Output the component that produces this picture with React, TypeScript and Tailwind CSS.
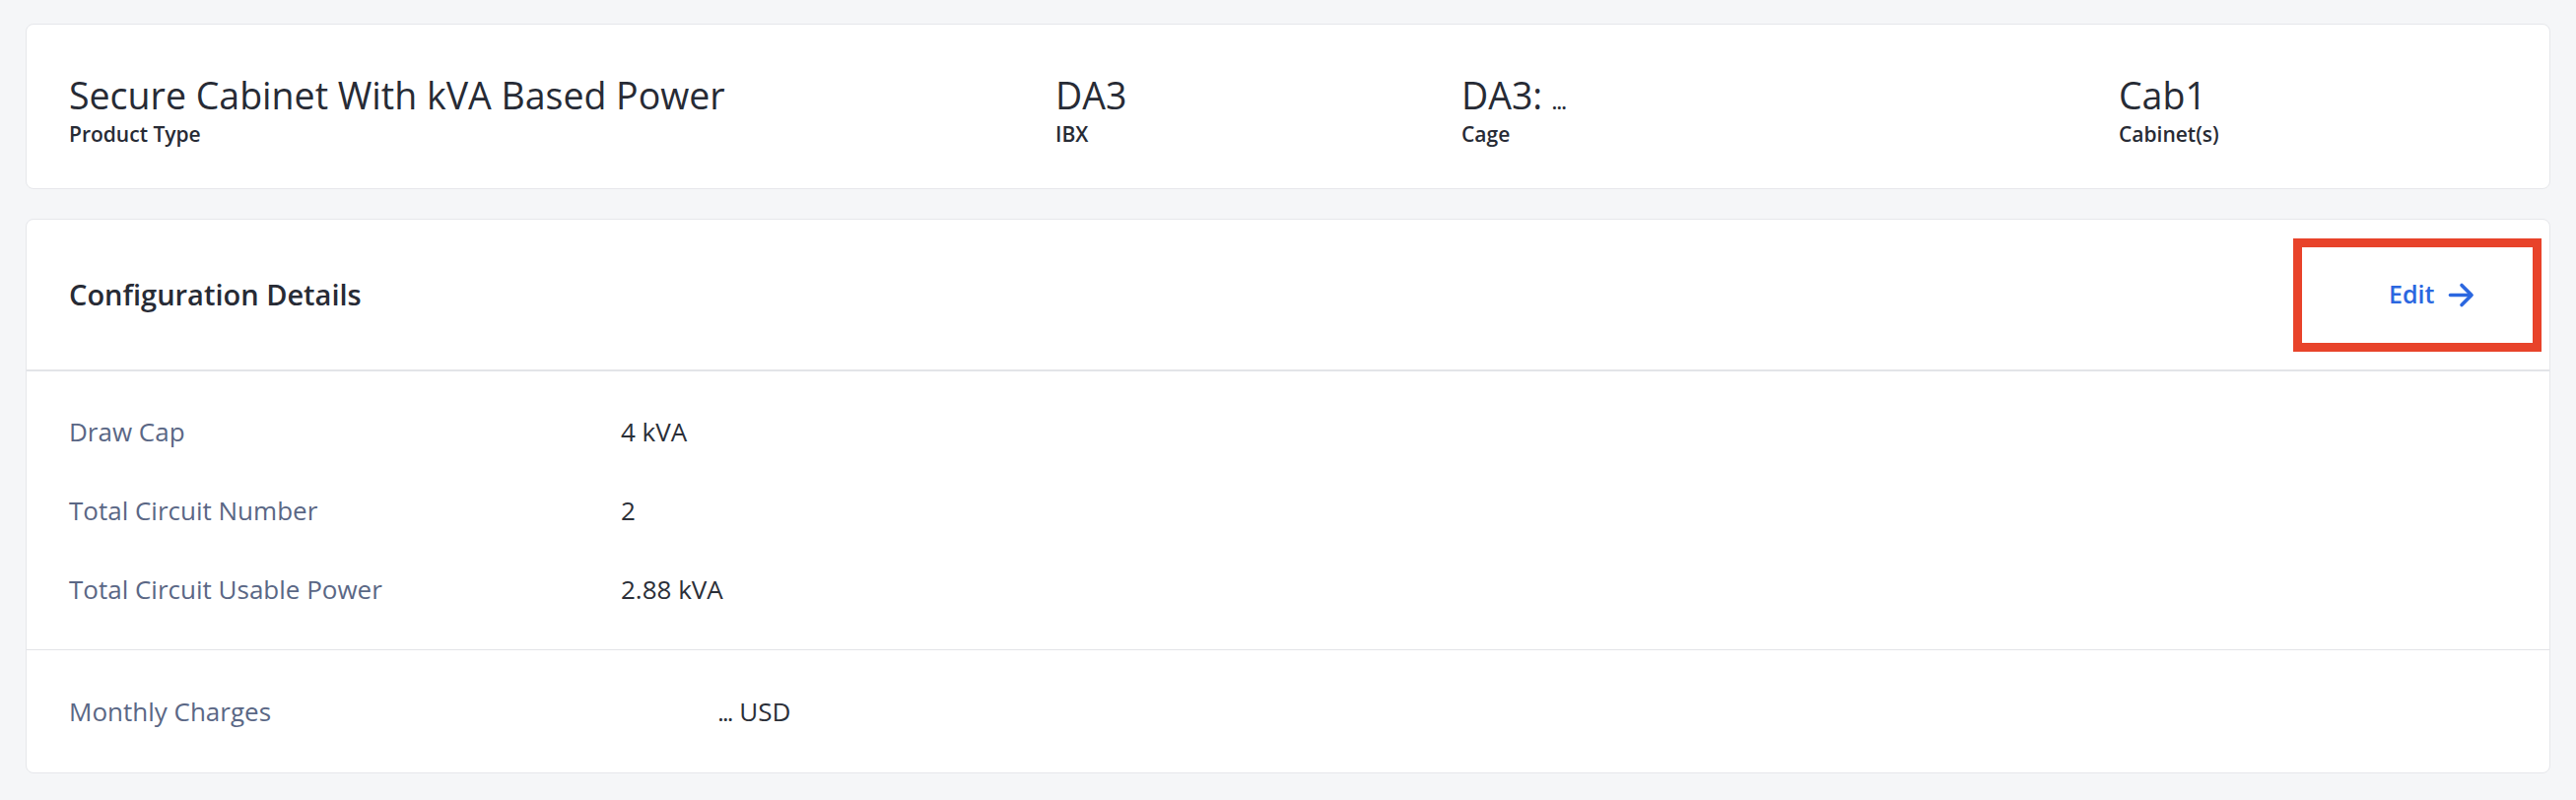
const font = { fontFamily: '"Open Sans", Lato, sans-serif' };

const summary = [
  { value: 'Secure Cabinet With kVA Based Power', label: 'Product Type', more: false },
  { value: 'DA3', label: 'IBX', more: false },
  { value: 'DA3: ', label: 'Cage', more: true },
  { value: 'Cab1', label: 'Cabinet(s)', more: false },
];

const config = [
  { label: 'Draw Cap', value: '4 kVA' },
  { label: 'Total Circuit Number', value: '2' },
  { label: 'Total Circuit Usable Power', value: '2.88 kVA' },
];

function ArrowIcon() {
  return (
    <svg width="27" height="27" viewBox="0 0 27 27" fill="none" stroke="currentColor" strokeWidth="3.6" strokeLinecap="round" strokeLinejoin="round">
      <path d="M2.5 13.5h21" />
      <path d="M14 3.5l10 10-10 10" />
    </svg>
  );
}

export default function App() {
  return (
    <div className="min-h-[812px] bg-[#f5f6f8] px-[26px] pt-[24px] pb-[25px] text-[#272b35]" style={font}>
      {/* summary card */}
      <div className="h-[168px] rounded-lg border border-[#e6e7eb] bg-white px-[43px] pt-[6px] flex items-center">
        <div className="grid w-full grid-cols-[1001px_412px_667px_1fr]">
          {summary.map(s => (
            <div key={s.label} className="flex flex-col gap-[2px]">
              <div className="h-[48px] text-[37.5px] leading-[48px] font-normal text-[#272b35] whitespace-nowrap">
                {s.value}
                {s.more && <span className="text-[17px] leading-none font-bold">…</span>}
              </div>
              <div className="text-[21px] leading-[26px] font-semibold text-[#272b35]">{s.label}</div>
            </div>
          ))}
        </div>
      </div>

      {/* configuration card */}
      <div className="mt-[30px] rounded-lg border border-[#e6e7eb] bg-white">
        <div className="h-[154px] flex items-center justify-between pl-[43px] pr-[8px] border-b-2 border-[#e3e4e8]">
          <h2 className="text-[29px] font-semibold text-[#272b35]">Configuration Details</h2>
          <button className="h-[115px] w-[252px] border-[9px] border-[#e8432a] flex items-center pl-[88px] gap-[14px] text-[#2b67e0] text-[25px] font-semibold">
            Edit
            <ArrowIcon />
          </button>
        </div>

        <div className="py-[21px] pl-[43px] border-b border-[#e3e4e8]">
          {config.map(r => (
            <div key={r.label} className="h-[80px] flex items-center text-[26px]">
              <div className="w-[560px] text-[#5a6785]">{r.label}</div>
              <div className="text-[#2b2f38]">{r.value}</div>
            </div>
          ))}
        </div>

        <div className="h-[124px] flex items-center pl-[43px] text-[26px]">
          <div className="w-[659px] text-[#5a6785]">Monthly Charges</div>
          <div className="text-[#2b2f38]">
            <span className="text-[17px] leading-none font-bold">…</span> USD
          </div>
        </div>
      </div>
    </div>
  );
}
